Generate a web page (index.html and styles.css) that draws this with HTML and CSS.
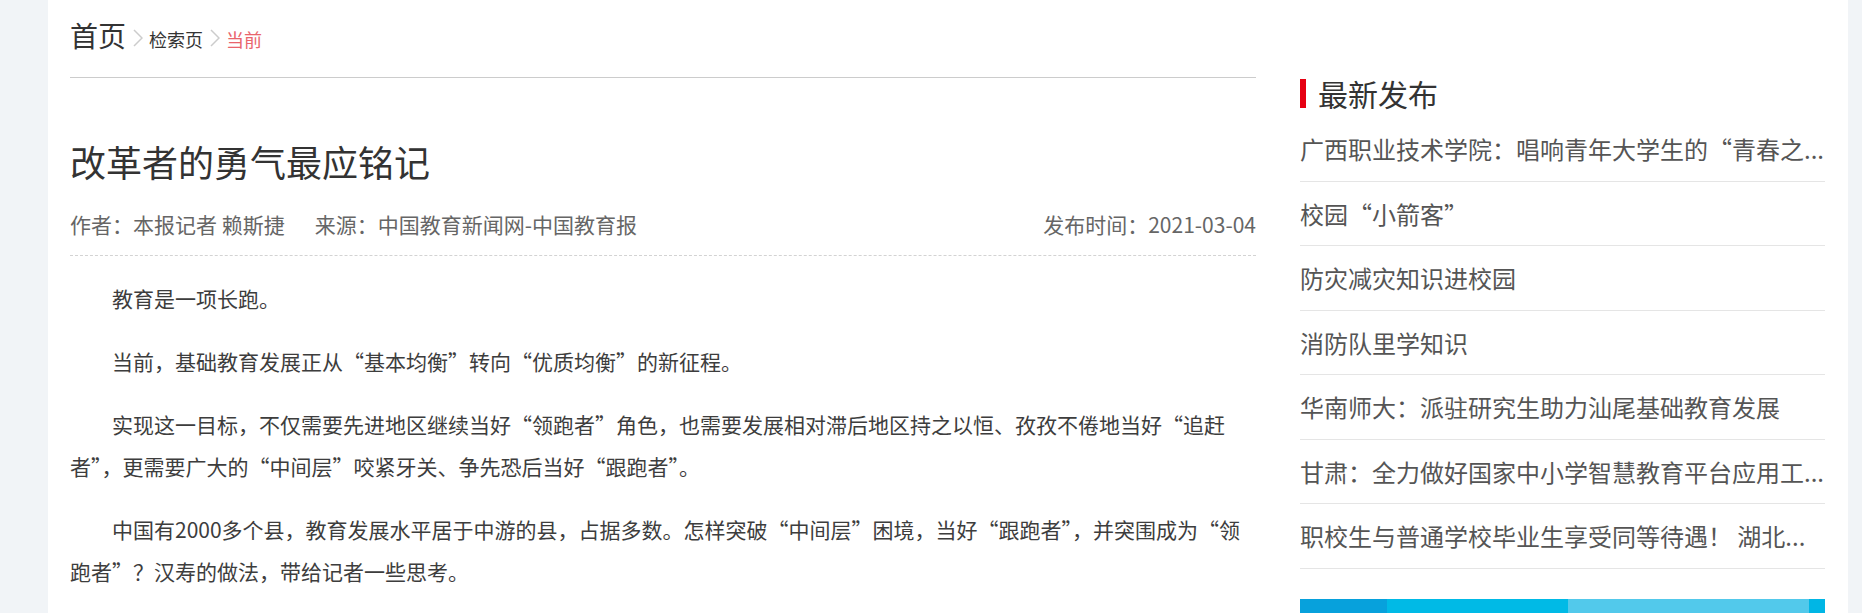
FILE: index.html
```html
<!DOCTYPE html>
<html lang="zh-CN">
<head>
    <meta charset="UTF-8">
    <meta name="viewport" content="width=device-width, initial-scale=1.0">
    <title>改革者的勇气最应铭记</title>
    <link rel="stylesheet" href="styles.css">
</head>
<body>
    <div class="page">
        <div class="main">
            <div class="crumbs">
                <a href="#" class="crumb-home">首页</a>
                <svg class="crumb-sep" viewBox="0 0 10 18"><polyline points="1,1 9,9 1,17"/></svg>
                <a href="#" class="crumb-link">检索页</a>
                <svg class="crumb-sep" viewBox="0 0 10 18"><polyline points="1,1 9,9 1,17"/></svg>
                <span class="crumb-current">当前</span>
            </div>

            <h1 class="title">改革者的勇气最应铭记</h1>
            <div class="meta">
                <div>
                    <span>作者：本报记者 赖斯捷</span><span class="source">来源：中国教育新闻网-中国教育报</span>
                </div>
                <span>发布时间：2021-03-04</span>
            </div>

            <div class="article">
                <p>教育是一项长跑。</p>
                <p>当前，基础教育发展正从“基本均衡”转向“优质均衡”的新征程。</p>
                <p>实现这一目标，不仅需要先进地区继续当好“领跑者”角色，也需要发展相对滞后地区持之以恒、孜孜不倦地当好“追赶者”，更需要广大的“中间层”咬紧牙关、争先恐后当好“跟跑者”。</p>
                <p>中国有2000多个县，教育发展水平居于中游的县，占据多数。怎样突破“中间层”困境，当好“跟跑者”，并突围成为“领跑者”？汉寿的做法，带给记者一些思考。</p>
            </div>
        </div>

        <div class="side">
            <h2 class="side-title">最新发布</h2>
            <ul class="news">
                <li><a href="#">广西职业技术学院：唱响青年大学生的“青春之...</a></li>
                <li><a href="#">校园“小箭客”</a></li>
                <li><a href="#">防灾减灾知识进校园</a></li>
                <li><a href="#">消防队里学知识</a></li>
                <li><a href="#">华南师大：派驻研究生助力汕尾基础教育发展</a></li>
                <li><a href="#">甘肃：全力做好国家中小学智慧教育平台应用工...</a></li>
                <li><a href="#">职校生与普通学校毕业生享受同等待遇！ 湖北...</a></li>
            </ul>
            <div class="banner"></div>
        </div>
    </div>
</body>
</html>
```

FILE: styles.css
```css
body {
    margin: 0;
    background: #f1f4f7;
    font-family: "Noto Sans CJK SC", sans-serif;
    color: #333;
}
a {
    text-decoration: none;
}
.page {
    display: flex;
    justify-content: space-between;
    box-sizing: border-box;
    width: 1800px;
    margin-left: 48px;
    padding: 0 23px 0 22px;
    background: #fff;
}
.main {
    width: 1186px;
}
.side {
    width: 525px;
    padding-top: 70px;
}

/* breadcrumb */
.crumbs {
    display: flex;
    align-items: baseline;
    height: 60px;
    padding-top: 17px;
    border-bottom: 1px solid #ccc;
}
.crumb-home {
    font-size: 28px;
    line-height: 36px;
    color: #333;
}
.crumb-sep {
    width: 10px;
    height: 18px;
    margin: 0 6px 2px 7px;
    fill: none;
    stroke: #ccc;
    stroke-width: 1.5;
}
.crumb-link {
    font-size: 18px;
    color: #333;
}
.crumb-current {
    font-size: 18px;
    color: #e9646c;
}

/* article head */
.title {
    margin: 58px 0 0;
    font-size: 36px;
    line-height: 50px;
    font-weight: normal;
    color: #333;
}
.meta {
    display: flex;
    justify-content: space-between;
    margin-top: 23px;
    padding-bottom: 16px;
    border-bottom: 1px dashed #d3d3d3;
    font-size: 21px;
    line-height: 30px;
    color: #666;
}
.source {
    margin-left: 30px;
}

/* article body */
.article {
    padding-top: 21px;
}
.article p {
    margin: 0 0 21px;
    font-size: 21px;
    line-height: 42px;
    text-indent: 2em;
    color: #3d3d3d;
}

/* sidebar */
.side-title {
    display: flex;
    align-items: center;
    margin: 0;
    font-size: 30px;
    line-height: 47px;
    font-weight: normal;
    color: #333;
}
.side-title::before {
    content: "";
    width: 6px;
    height: 29px;
    margin-right: 12px;
    background: #e60012;
}
.news {
    list-style: none;
    margin: 0;
    padding: 0;
}
.news li {
    font-size: 24px;
    line-height: 63.5px;
    border-bottom: 1px solid #e5e5e5;
    white-space: nowrap;
    overflow: hidden;
}
.news a {
    color: #555;
}
.banner {
    height: 120px;
    margin-top: 30px;
    background: linear-gradient(to right, #07a1dc 0, #07a1dc 16.6%, #00bae6 16.6%, #00bae6 51%, #52c9eb 51%, #52c9eb 97%, #00b6e5 97%);
}
```
